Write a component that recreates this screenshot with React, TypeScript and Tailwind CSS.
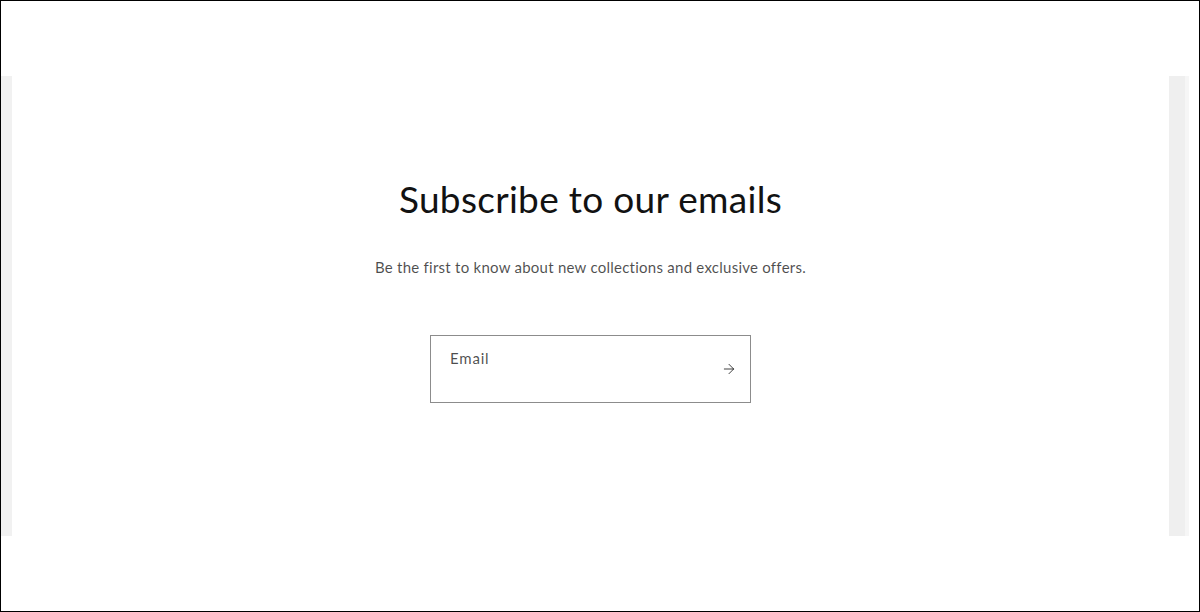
import { ArrowRight } from 'lucide-react'

export default function App() {
  return (
    <div className="h-[612px] w-[1200px] border border-black bg-white font-['Lato',sans-serif]">
      <div className="mt-[75px] flex h-[460px] pr-[10px]">
        {/* side rails */}
        <div className="w-[11px] bg-[#f1f1f1]" />
        <section className="flex flex-1 flex-col items-center pt-[99px]">
          <h2 className="text-[37px] leading-[48px] tracking-[0.3px] text-[#121212]">
            Subscribe to our emails
          </h2>
          <p className="mt-[32px] text-[15px] leading-[24px] tracking-[0.25px] text-[#121212]/75">
            Be the first to know about new collections and exclusive offers.
          </p>
          <form className="relative mt-[56px] h-[68px] w-[321px] border border-[#8c8c8c]">
            <label className="absolute left-[19px] top-[11px] text-[15px] tracking-[0.8px] text-[#121212]/75">
              Email
            </label>
            <input type="email" className="h-full w-full bg-transparent pl-[19px] pt-[22px] outline-none" />
            <button type="button" className="absolute right-[13px] top-[25px] text-[#121212]/80">
              <ArrowRight className="h-[16px] w-[16px]" strokeWidth={1.5} />
            </button>
          </form>
        </section>
        <div className="flex w-[20px] bg-[#efefef]">
          <div className="ml-auto w-[4px] bg-[#f6f6f6]" />
        </div>
      </div>
    </div>
  )
}
